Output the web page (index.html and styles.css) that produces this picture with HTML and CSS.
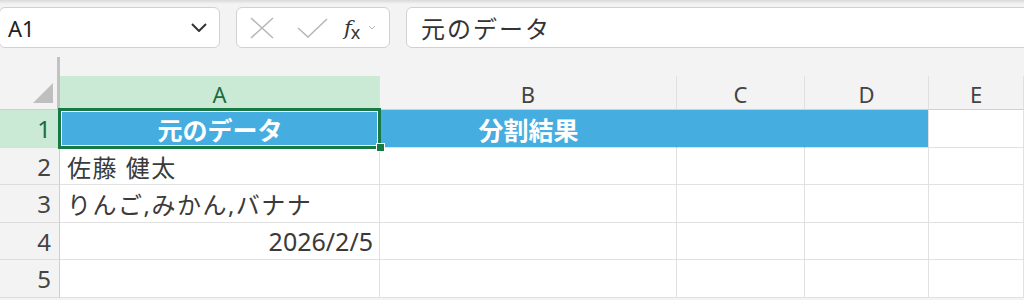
FILE: index.html
```html
<!DOCTYPE html>
<html lang="ja">
<head>
  <meta charset="UTF-8">
  <meta name="viewport" content="width=device-width, initial-scale=1.0">
  <title>Sheet</title>
  <link rel="stylesheet" href="styles.css">
</head>
<body>
  <div class="toolbar">
    <div class="namebox">
      <span class="ref">A1</span>
      <svg class="chev" width="16" height="9" viewBox="0 0 16 9"><path d="M1 1 L8 8 L15 1" fill="none" stroke="#333" stroke-width="2"/></svg>
    </div>
    <div class="fx-box">
      <svg class="ico" width="24" height="22" viewBox="0 0 24 22"><path d="M1 1 L23 21 M23 1 L1 21" fill="none" stroke="#b8b8b8" stroke-width="1.6"/></svg>
      <svg class="ico check" width="31" height="20" viewBox="0 0 31 20"><path d="M1 10 L11 19 L30 1" fill="none" stroke="#b8b8b8" stroke-width="1.6"/></svg>
      <span class="fx"><span class="fx-f">f</span><span class="fx-x">x</span></span>
      <svg class="chev-sm" width="8" height="5" viewBox="0 0 8 5"><path d="M1 1 L4 4 L7 1" fill="none" stroke="#bbb" stroke-width="1"/></svg>
    </div>
    <div class="formula">元のデータ</div>
  </div>

  <div class="gap"><div class="gap-line"></div></div>

  <div class="sheet">
    <div class="corner">
      <svg width="20" height="20" viewBox="0 0 20 20"><polygon points="0,20 20,20 20,0" fill="#bfbfbf"/></svg>
    </div>
    <div class="colhead active">A</div>
    <div class="colhead">B</div>
    <div class="colhead">C</div>
    <div class="colhead">D</div>
    <div class="colhead">E</div>

    <div class="rowhead active">1</div>
    <div class="cell fill title selected">
      元のデータ
      <div class="selection"><div class="handle"></div></div>
    </div>
    <div class="cell fill title">分割結果</div>
    <div class="cell fill"></div>
    <div class="cell fill last"></div>
    <div class="cell"></div>

    <div class="rowhead">2</div>
    <div class="cell">佐藤 健太</div>
    <div class="cell"></div>
    <div class="cell"></div>
    <div class="cell"></div>
    <div class="cell"></div>

    <div class="rowhead">3</div>
    <div class="cell">りんご,みかん,バナナ</div>
    <div class="cell"></div>
    <div class="cell"></div>
    <div class="cell"></div>
    <div class="cell"></div>

    <div class="rowhead">4</div>
    <div class="cell num">2026/2/5</div>
    <div class="cell"></div>
    <div class="cell"></div>
    <div class="cell"></div>
    <div class="cell"></div>

    <div class="rowhead">5</div>
    <div class="cell"></div>
    <div class="cell"></div>
    <div class="cell"></div>
    <div class="cell"></div>
    <div class="cell"></div>
  </div>
</body>
</html>
```

FILE: styles.css
```css
/* Reset */
* {
  box-sizing: border-box;
  margin: 0;
  padding: 0;
}

body {
  font-family: 'Noto Sans', 'Noto Sans CJK JP', sans-serif;
  background: linear-gradient(#d9d9d9 0, #f3f3f3 4px) #f3f3f3;
  color: #333;
  width: 1024px;
  height: 300px;
  overflow: hidden;
}

/* Formula bar */
.toolbar {
  display: flex;
  gap: 16px;
  padding-top: 7px;
  height: 48px;
  margin-left: -1px;
  margin-right: -12px;
}

.namebox,
.fx-box,
.formula {
  height: 41px;
  background-color: #fff;
  border: 1px solid #d1d1d1;
  border-radius: 6px;
  display: flex;
  align-items: center;
}

.namebox {
  width: 221px;
  padding: 0 12px 0 8px;
  justify-content: space-between;
}

.ref {
  font-size: 22px;
  color: #222;
}

.fx-box {
  width: 154px;
  padding-left: 13px;
}

.ico {
  margin-right: 23px;
}

.ico.check {
  margin-right: 16px;
}

.fx {
  font-family: 'DejaVu Serif', serif;
  font-style: italic;
  color: #333;
  font-size: 21px;
  margin-right: 8px;
  display: flex;
  align-items: flex-end;
}

.fx-x {
  font-family: 'Noto Sans', sans-serif;
  font-style: normal;
  font-size: 18px;
  margin-left: -1px;
  margin-bottom: -4px;
}

.formula {
  flex: 1;
  padding-left: 14px;
  font-size: 24px;
  letter-spacing: 2px;
  color: #333;
}

/* Space above headers */
.gap {
  height: 28px;
  padding-top: 9px;
}

.gap-line {
  width: 60px;
  height: 19px;
  border-right: 3px solid #c2c2c2;
}

/* Grid */
.sheet {
  display: grid;
  grid-template-columns: 60px 320px 297px 128px 124px 1fr;
  grid-template-rows: 34px 38px 37px 38px 37px 38px;
  background-color: #fff;
}

.corner {
  background-color: #f3f3f3;
  border-right: 3px solid #c2c2c2;
  border-bottom: 1px solid #cfcfcf;
  display: flex;
  justify-content: flex-end;
  align-items: flex-end;
  padding: 0 4px 6px 0;
}

.colhead {
  background-color: #f3f3f3;
  border-right: 1px solid #e0e0e0;
  border-bottom: 1px solid #d0d0d0;
  display: flex;
  justify-content: center;
  align-items: center;
  font-size: 22px;
  color: #444;
  padding-top: 2px;
}

.rowhead {
  background-color: #f3f3f3;
  border-right: 1px solid #cfcfcf;
  border-bottom: 1px solid #dcdcdc;
  display: flex;
  justify-content: flex-end;
  align-items: center;
  padding-right: 8px;
  font-size: 24px;
  color: #444;
}

.colhead.active,
.rowhead.active {
  background-color: #caead6;
  color: #1c6c3f;
}

.cell {
  border-right: 1px solid #e1e1e1;
  border-bottom: 1px solid #e1e1e1;
  display: flex;
  align-items: center;
  padding: 0 6px 0 7px;
  font-size: 24px;
  letter-spacing: 1.5px;
  color: #3a3a3a;
  white-space: nowrap;
  position: relative;
}

.cell.num {
  justify-content: flex-end;
  font-size: 25px;
  letter-spacing: 0;
}

.cell.fill {
  background-color: #46ade0;
  border-right-color: #46ade0;
}

.cell.fill.last {
  border-right-color: #e1e1e1;
}

.cell.title {
  justify-content: center;
  color: #fff;
  font-weight: 700;
  font-size: 25px;
  letter-spacing: 0;
}

.cell.selected {
  z-index: 1;
}

/* Active cell outline */
.selection {
  position: absolute;
  top: -2px;
  left: -2px;
  right: -2px;
  bottom: -2px;
  border: 3px solid #177a44;
  box-shadow: inset 0 0 0 1px #fff;
}

.handle {
  position: absolute;
  right: -7px;
  bottom: -6px;
  width: 9px;
  height: 9px;
  background-color: #177a44;
  border: 1px solid #fff;
}
```
